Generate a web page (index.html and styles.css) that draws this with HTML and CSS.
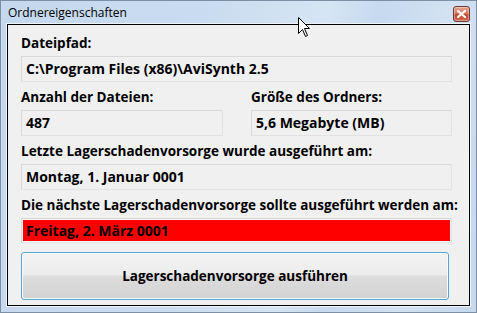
FILE: index.html
```html
<!DOCTYPE html>
<html lang="de">
<head>
<meta charset="utf-8">
<title>Ordnereigenschaften</title>
<link rel="stylesheet" href="styles.css">
</head>
<body>
<div class="window">
  <div class="titlebar">
    <span class="title">Ordnereigenschaften</span>
    <span class="close" aria-label="Schließen">
      <svg width="9" height="8" viewBox="0 0 9 8"><path d="M1 1 L8 7 M8 1 L1 7" stroke="#fff" stroke-width="2.2" stroke-linecap="square" fill="none"/></svg>
    </span>
  </div>
  <div class="client">
    <div class="field">
      <div class="label">Dateipfad:</div>
      <div class="box">C:\Program Files (x86)\AviSynth 2.5</div>
    </div>
    <div class="row">
      <div class="field">
        <div class="label">Anzahl der Dateien:</div>
        <div class="box">487</div>
      </div>
      <div class="field">
        <div class="label">Größe des Ordners:</div>
        <div class="box">5,6 Megabyte (MB)</div>
      </div>
    </div>
    <div class="field">
      <div class="label">Letzte Lagerschadenvorsorge wurde ausgeführt am:</div>
      <div class="box">Montag, 1. Januar 0001</div>
    </div>
    <div class="field">
      <div class="label">Die nächste Lagerschadenvorsorge sollte ausgeführt werden am:</div>
      <div class="box alert">Freitag, 2. März 0001</div>
    </div>
    <button class="action">Lagerschadenvorsorge ausführen</button>
  </div>
  <svg class="cursor" width="13" height="21" viewBox="0 0 13 21"><path d="M0.5 0.5 L0.5 16.5 L4.5 12.5 L7.5 19.5 L9.5 18.5 L6.5 11.5 L11.5 11.5 Z" fill="#fff" stroke="#000" stroke-width="1" stroke-linejoin="miter"/></svg>
</div>
</body>
</html>
```

FILE: styles.css
```css
html, body {
  margin: 0;
  padding: 0;
}
body {
  width: 477px;
  height: 313px;
  overflow: hidden;
  font-family: "Open Sans", "Noto Sans", sans-serif;
}
.window {
  position: relative;
  box-sizing: border-box;
  width: 477px;
  height: 313px;
  border: 1px solid #7d8fa5;
  background: linear-gradient(100deg, #c4d8ee 0%, #cadcef 40%, #d6e5f4 62%, #c6d9ee 72%, #d3e2f2 85%, #c4d7ec 100%);
  display: flex;
  flex-direction: column;
  padding: 0 6px 6px 6px;
}
.titlebar {
  height: 23px;
  flex-shrink: 0;
  display: flex;
  align-items: center;
  justify-content: space-between;
}
.title {
  font-size: 12px;
  color: #000;
  padding-left: 1px;
  margin-top: -1px;
}
.close {
  box-sizing: border-box;
  width: 17px;
  height: 16px;
  margin-top: 2px;
  border: 1px solid #6b3a32;
  border-radius: 3px;
  background: linear-gradient(#e8a493 0%, #d47a63 45%, #c2472f 55%, #cf6a52 100%);
  display: flex;
  align-items: center;
  justify-content: center;
  box-shadow: inset 0 0 0 1px rgba(255,255,255,0.35);
}
.client {
  flex: 1;
  min-height: 0;
  border: 1px solid #000;
  box-shadow: 0 0 0 1px #eef4fa;
  background: #f0f0f0;
  padding: 10px 17px 5px 13px;
  display: flex;
  flex-direction: column;
  gap: 7px;
}
.row {
  display: grid;
  grid-template-columns: 202px 201px;
  column-gap: 28px;
}
.field {
  display: flex;
  flex-direction: column;
  gap: 5px;
}
.label, .box, .action {
  font-size: 13.5px;
  font-weight: 700;
  line-height: 16px;
  color: #000;
  white-space: nowrap;
}
.box {
  box-sizing: border-box;
  height: 26px;
  font-size: 14px;
  border: 1px solid #d9d9d9;
  border-right-color: #e3e3e3;
  border-bottom-color: #e3e3e3;
  background: #f0f0f0;
  padding: 4px 4px;
  overflow: hidden;
}
.box.alert {
  height: 25px;
  background: #ff0000;
  box-shadow: inset 0 0 0 1px #f6f6f6;
  padding: 4px 2px 4px 4px;
}
.action {
  margin-top: 2px;
  height: 48px;
  width: 428px;
  flex-shrink: 0;
  border: 1px solid #55a6d6;
  border-radius: 3px;
  background: linear-gradient(#f3f3f3 0%, #ececec 48%, #dddddd 50%, #d2d2d2 100%);
  box-shadow: inset 0 0 0 1px #f8fbfd;
  font-family: "Open Sans", "Noto Sans", sans-serif;
  padding: 0;
}
.cursor {
  position: absolute;
  left: 297px;
  top: 16px;
}
```
